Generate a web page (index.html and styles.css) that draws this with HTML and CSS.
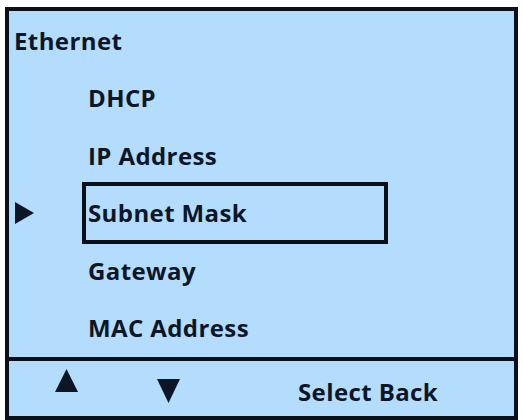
FILE: index.html
```html
<!DOCTYPE html>
<html>
<head>
<meta charset="utf-8">
<link rel="stylesheet" href="styles.css">
</head>
<body>
<div class="screen">
  <div class="menu">
    <div class="title">Ethernet</div>
    <div class="row"><span class="marker"></span><span class="item">DHCP</span></div>
    <div class="row"><span class="marker"></span><span class="item">IP Address</span></div>
    <div class="row"><span class="marker"><svg width="19" height="22" viewBox="0 0 19 22"><polygon points="0,0 19,11 0,22" fill="#0d1626"/></svg></span><span class="item selected">Subnet Mask</span></div>
    <div class="row"><span class="marker"></span><span class="item">Gateway</span></div>
    <div class="row"><span class="marker"></span><span class="item">MAC Address</span></div>
  </div>
  <div class="footer">
    <svg class="up" width="23" height="23" viewBox="0 0 23 23"><polygon points="11.5,0 23,23 0,23" fill="#0d1626"/></svg>
    <svg class="down" width="23" height="24" viewBox="0 0 23 24"><polygon points="0,0 23,0 11.5,24" fill="#0d1626"/></svg>
    <span class="label">Select Back</span>
  </div>
</div>
</body>
</html>
```

FILE: styles.css
```css
html, body {
  margin: 0;
  padding: 0;
  background: #ffffff;
}
body {
  font-family: "Open Sans", Lato, sans-serif;
  font-weight: 700;
  color: #0d1626;
  letter-spacing: 0.4px;
}
.screen {
  margin: 7px 0 0 5px;
  width: 513px;
  height: 413px;
  box-sizing: border-box;
  border: 4px solid #0b0f18;
  background: #b4dcfc;
  display: flex;
  flex-direction: column;
}
.menu {
  height: 346px;
  padding-top: 1px;
  box-sizing: border-box;
}
.title {
  font-size: 24px;
  height: 57.4px;
  line-height: 57.4px;
  padding-left: 5px;
}
.row {
  display: flex;
  height: 57.4px;
  align-items: center;
}
.marker {
  width: 75px;
  padding-left: 6px;
  box-sizing: border-box;
  display: flex;
  align-items: center;
}
.item {
  width: 302px;
  height: 57.4px;
  line-height: 57.4px;
  font-size: 24px;
  padding-left: 4px;
  box-sizing: border-box;
}
.selected {
  outline: 4px solid #0b0f18;
  outline-offset: -2px;
}
.footer {
  flex: 1;
  border-top: 4px solid #0b0f18;
  display: flex;
  align-items: flex-start;
  padding-left: 46px;
}
.up {
  margin-top: 8px;
}
.down {
  margin-top: 18px;
  margin-left: 79px;
}
.label {
  font-size: 24px;
  line-height: 30px;
  margin-top: 16px;
  margin-left: 118px;
}
```
